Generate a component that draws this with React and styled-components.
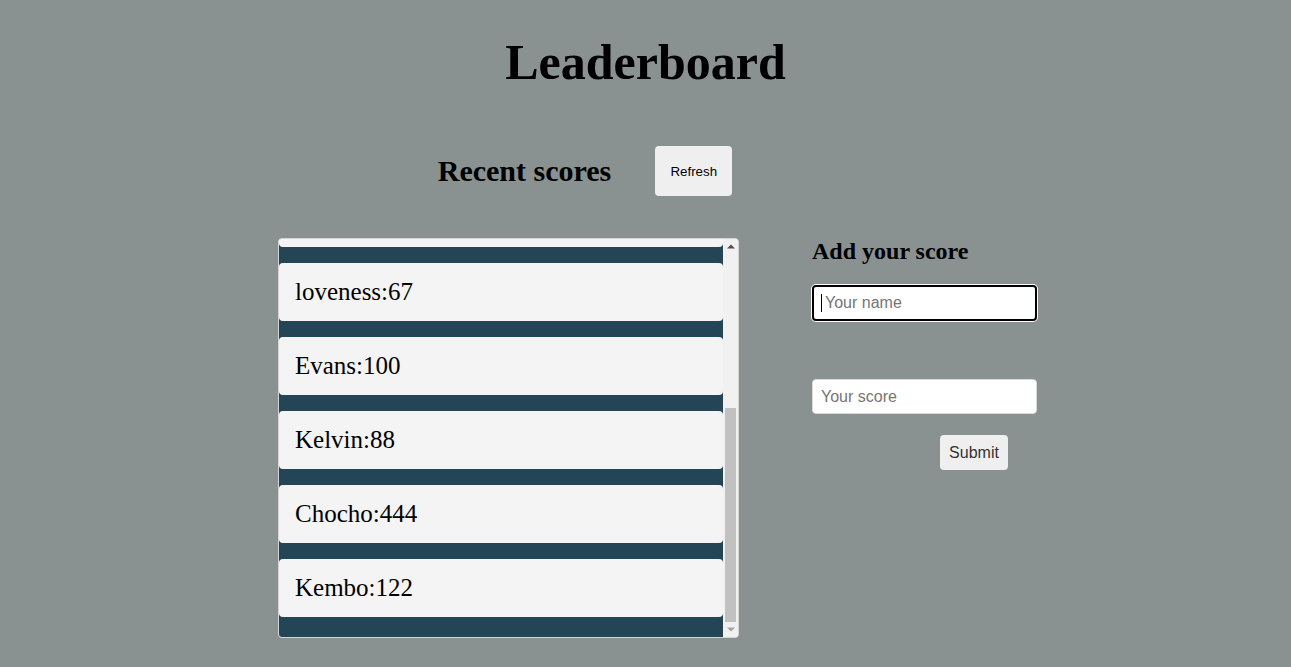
import React, { useLayoutEffect, useRef, useState } from "react";
import styled, { createGlobalStyle } from "styled-components";

const Global = createGlobalStyle`
  html, body { margin: 0; padding: 0; }
  body {
    background: #899191;
    font-family: "Liberation Serif", "Times New Roman", serif;
    color: #000;
  }
`;

const Page = styled.div`
  display: flex;
  flex-direction: column;
  align-items: center;
  min-height: 667px;
`;

const Title = styled.h1`
  margin: 34px 0 0;
  font-size: 50px;
  line-height: 57px;
  font-weight: 700;
`;

const HeaderRow = styled.div`
  display: flex;
  align-items: center;
  gap: 44px;
  margin-top: 55px;
  margin-right: 121px;
`;

const SubTitle = styled.h2`
  margin: 0;
  font-size: 30px;
  font-weight: 700;
`;

const Button = styled.button`
  font-family: "Liberation Sans", Arial, sans-serif;
  font-size: ${(p) => p.$size || 13.33}px;
  color: ${(p) => p.$color || "#000"};
  background: #efefef;
  border: none;
  border-radius: 4px;
  width: ${(p) => p.$w}px;
  height: ${(p) => p.$h}px;
  padding: 0;
  cursor: pointer;
`;

const Main = styled.div`
  display: flex;
  align-items: flex-start;
  gap: 73px;
  margin-top: 42px;
  padding-left: 24px;
`;

const ListBox = styled.div`
  width: 461px;
  height: 400px;
  box-sizing: border-box;
  border: 1px solid #d4d4d4;
  border-radius: 4px;
  background: #f4f4f4;
  overflow: hidden;
  display: flex;
`;

const ScrollArea = styled.div`
  flex: 1;
  overflow-y: auto;
  scrollbar-width: none;
  &::-webkit-scrollbar { display: none; }
`;

const ScrollBar = styled.div`
  width: 15px;
  flex-shrink: 0;
  background: #f1f1f1;
  display: flex;
  flex-direction: column;
`;

const ArrowBtn = styled.div`
  height: 15px;
  display: flex;
  align-items: center;
  justify-content: center;
  flex-shrink: 0;
`;

const Track = styled.div`
  flex: 1;
  position: relative;
`;

const Thumb = styled.div`
  position: absolute;
  left: 2px;
  right: 2px;
  background: #c1c1c1;
`;

const List = styled.ul`
  list-style: none;
  margin: 0;
  padding: 16px 0 20px;
  background: #244556;
  display: flex;
  flex-direction: column;
  gap: 16px;
`;

const Item = styled.li`
  height: 58px;
  background: #f4f4f4;
  border-radius: 4px;
  display: flex;
  align-items: center;
  padding-left: 16px;
  font-size: 25px;
`;

const Form = styled.div`
  width: 225px;
  display: flex;
  flex-direction: column;
`;

const FormTitle = styled.h3`
  margin: 0;
  font-size: 24px;
  font-weight: 700;
  line-height: 26px;
`;

const Field = styled.div`
  position: relative;
  margin-top: ${(p) => p.$mt}px;
  &::before {
    content: "";
    display: ${(p) => (p.$caret ? "block" : "none")};
    position: absolute;
    left: 9px;
    top: 9px;
    width: 1px;
    height: 18px;
    background: #000;
  }
`;

const Input = styled.input`
  display: block;
  box-sizing: border-box;
  width: 225px;
  height: ${(p) => (p.$focused ? 36 : 35)}px;
  border-radius: 4px;
  background: #fff;
  font-family: "Liberation Sans", Arial, sans-serif;
  font-size: 16px;
  padding: 0 0 0 ${(p) => (p.$focused ? 11 : 8)}px;
  outline: none;
  border: ${(p) => (p.$focused ? "2px solid #000" : "1px solid #d9d9d9")};
  box-shadow: ${(p) => (p.$focused ? "0 0 0 1px #fff" : "none")};
  &::placeholder { color: #757575; }
`;

const SubmitRow = styled.div`
  display: flex;
  justify-content: flex-end;
  padding-right: 29px;
  margin-top: 21px;
`;

const scores = [
  ["Brian", 45],
  ["Mercy", 210],
  ["Otieno", 73],
  ["Wanjiru", 150],
  ["loveness", 67],
  ["Evans", 100],
  ["Kelvin", 88],
  ["Chocho", 444],
  ["Kembo", 122],
];

const Up = () => (
  <svg width="8" height="5" viewBox="0 0 8 5"><path d="M0 4.5 L4 0.5 L8 4.5 Z" fill="#505050" /></svg>
);
const Down = () => (
  <svg width="8" height="5" viewBox="0 0 8 5"><path d="M0 0.5 L4 4.5 L8 0.5 Z" fill="#a3a3a3" /></svg>
);

export default function App() {
  const ref = useRef(null);
  const trackRef = useRef(null);
  const [thumb, setThumb] = useState({ top: 0, height: 0 });

  const update = () => {
    const el = ref.current;
    const tr = trackRef.current;
    if (!el || !tr) return;
    const th = tr.clientHeight;
    const h = Math.max(20, (el.clientHeight / el.scrollHeight) * th);
    const max = el.scrollHeight - el.clientHeight;
    const top = max > 0 ? (el.scrollTop / max) * (th - h) : 0;
    setThumb({ top, height: h });
  };

  useLayoutEffect(() => {
    if (ref.current) ref.current.scrollTop = ref.current.scrollHeight;
    update();
  }, []);

  return (
    <Page>
      <Global />
      <Title>Leaderboard</Title>
      <HeaderRow>
        <SubTitle>Recent scores</SubTitle>
        <Button $w={77} $h={50}>Refresh</Button>
      </HeaderRow>
      <Main>
        <ListBox>
          <ScrollArea ref={ref} onScroll={update}>
            <List>
              {scores.map(([n, s]) => (
                <Item key={n}>{n}:{s}</Item>
              ))}
            </List>
          </ScrollArea>
          <ScrollBar>
            <ArrowBtn><Up /></ArrowBtn>
            <Track ref={trackRef}>
              <Thumb style={{ top: thumb.top, height: thumb.height }} />
            </Track>
            <ArrowBtn><Down /></ArrowBtn>
          </ScrollBar>
        </ListBox>
        <Form>
          <FormTitle>Add your score</FormTitle>
          <Field $mt={21} $caret>
            <Input $focused placeholder="Your name" />
          </Field>
          <Field $mt={58}>
            <Input placeholder="Your score" />
          </Field>
          <SubmitRow>
            <Button $w={68} $h={35} $size={16} $color="#333">Submit</Button>
          </SubmitRow>
        </Form>
      </Main>
    </Page>
  );
}
